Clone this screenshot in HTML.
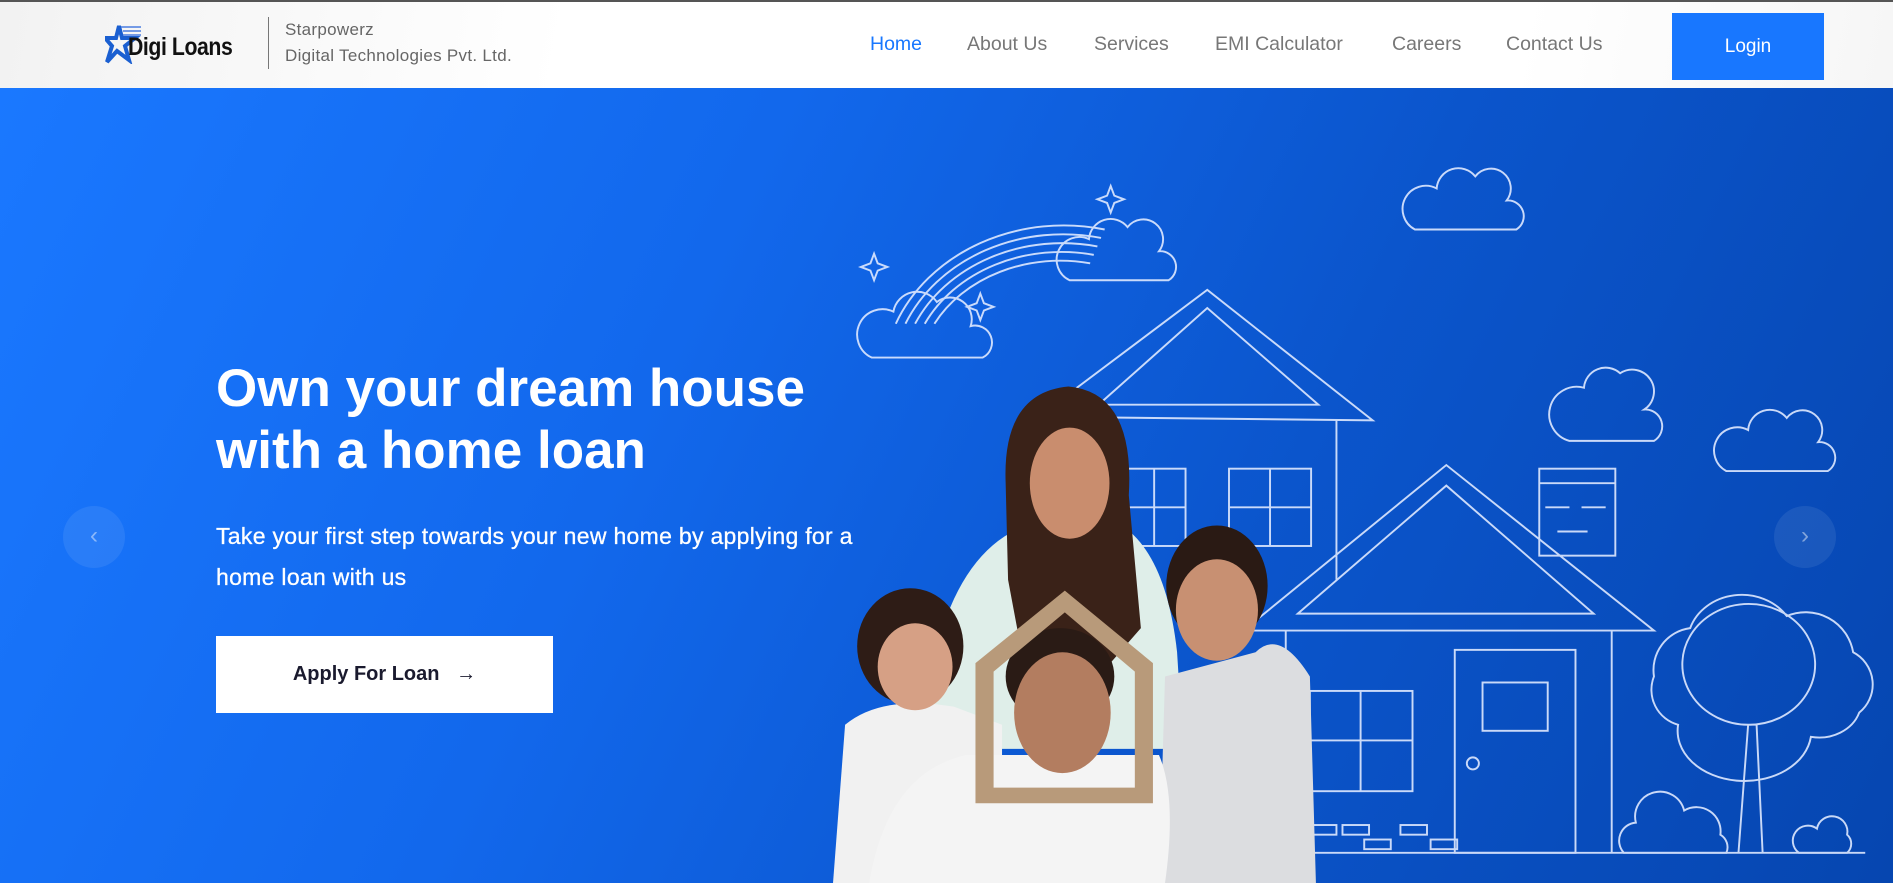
<!DOCTYPE html>
<html><head><meta charset="utf-8"><style>
*{margin:0;padding:0;box-sizing:border-box}
body{width:1893px;height:883px;overflow:hidden;font-family:"Liberation Sans",sans-serif;background:#fff;position:relative}
.top{position:absolute;left:0;top:0;width:1893px;height:2px;background:#555}
header{position:absolute;left:0;top:2px;width:1893px;height:86px;background:linear-gradient(100deg,#f2f2f2,#fff 30%,#fff 80%,#f6f6f6)}
.logo{position:absolute;left:105px;top:20px}
.brand{position:absolute;left:128px;top:31px;font-size:25px;font-weight:bold;color:#111;letter-spacing:-0.5px;transform:scaleX(0.85);transform-origin:left}
.div{position:absolute;left:268px;top:15px;width:1px;height:52px;background:#777}
.co{position:absolute;left:285px;font-size:17px;color:#666;letter-spacing:0.3px}
nav a{position:absolute;top:31px;font-size:19.5px;color:#777;text-decoration:none}
.login{position:absolute;left:1672px;top:11px;width:152px;height:67px;background:#1877ff;color:#fff;font-size:19px;text-align:center;line-height:67px}
.hero{position:absolute;left:0;top:88px;width:1893px;height:795px;background:linear-gradient(115deg,#1a78ff 0%,#1268ec 35%,#0b55cc 65%,#0646b0 100%)}
h1{position:absolute;left:216px;top:358px;font-size:53px;line-height:62px;color:#fff;font-weight:bold}
p{position:absolute;left:216px;top:516px;font-size:23px;line-height:41px;color:#fff;width:690px;letter-spacing:0.3px;-webkit-text-stroke:0.3px #fff}
.btn{position:absolute;left:216px;top:636px;width:337px;height:77px;background:#fff;color:#1a1a2e;font-weight:bold;font-size:20px;line-height:77px;text-align:center}
.arr{position:absolute;width:62px;height:62px;border-radius:50%;background:rgba(255,255,255,0.08);color:rgba(255,255,255,0.45);font-size:24px;text-align:center;line-height:60px}
</style></head><body>
<div class="hero"></div>
<svg style="position:absolute;left:0;top:0" width="1893" height="883" viewBox="0 0 1568 731" preserveAspectRatio="none">
<g fill="none" stroke="#dfe9ff" stroke-width="1.6" opacity="0.9">
<path d="M742 268 A150 130 0 0 1 915 190"/><path d="M750 268 A142 122 0 0 1 912 197"/><path d="M758 268 A134 114 0 0 1 909 204"/><path d="M766 268 A126 106 0 0 1 906 211"/><path d="M774 268 A118 98 0 0 1 903 218"/>
<path d="M722 296 h92 a14 14 0 0 0 -10 -26 a18 18 0 0 0 -28 -20 a20 20 0 0 0 -36 8 a16 16 0 0 0 -18 38z"/>
<path d="M886 232 h82 a13 13 0 0 0 -8 -24 a16 16 0 0 0 -26 -20 a18 18 0 0 0 -32 10 a14 14 0 0 0 -16 34z"/>
<path d="M1172 190 h84 a13 13 0 0 0 -8 -24 a16 16 0 0 0 -26 -20 a18 18 0 0 0 -32 10 a14 14 0 0 0 -18 34z"/>
<path d="M1300 365 h70 a14 14 0 0 0 -8 -26 a16 16 0 0 0 -20 -30 a18 18 0 0 0 -30 12 a14 14 0 0 0 -12 44z"/>
<path d="M1430 390 h84 a13 13 0 0 0 -8 -24 a16 16 0 0 0 -26 -20 a18 18 0 0 0 -32 10 a14 14 0 0 0 -18 34z"/>
<path d="M920 154 l3 8 8 3 -8 3 -3 8 -3 -8 -8 -3 8 -3z"/><path d="M724 210 l3 8 8 3 -8 3 -3 8 -3 -8 -8 -3 8 -3z"/><path d="M812 243 l3 8 8 3 -8 3 -3 8 -3 -8 -8 -3 8 -3z"/>
<path d="M860 345 L1000 240 L1137 348 Z"/><path d="M910 335 L1000 255 L1092 335 Z"/>
<path d="M918 348 V560 M1107 348 V480"/>
<rect x="930" y="388" width="52" height="64"/><path d="M956 388V452M930 420H982"/>
<rect x="1018" y="388" width="68" height="64"/><path d="M1052 388V452M1018 420H1086"/>
<path d="M1030 522 L1198 385 L1370 522 Z"/><path d="M1075 508 L1198 402 L1320 508 Z"/>
<path d="M1065 522 V706 M1335 522 V706"/>
<rect x="1275" y="388" width="63" height="72"/><path d="M1275 400H1338M1280 420h20M1310 420h20M1290 440h25"/>
<rect x="1205" y="538" width="100" height="168"/><rect x="1228" y="565" width="54" height="40"/><circle cx="1220" cy="632" r="5"/>
<rect x="1085" y="572" width="85" height="83"/><path d="M1127 572V655M1085 613H1170"/>
<path d="M1080 706 H1545"/>
<rect x="1085" y="683" width="22" height="8"/><rect x="1112" y="683" width="22" height="8"/><rect x="1160" y="683" width="22" height="8"/><rect x="1130" y="695" width="22" height="8"/><rect x="1185" y="695" width="22" height="8"/>
<path d="M1440 706 L1448 600 M1460 706 L1455 600 M1448 600 a55 50 0 1 1 1 0z M1390 600 a30 30 0 0 1 -20 -40 a35 35 0 0 1 30 -40 a45 40 0 0 1 80 -10 a40 40 0 0 1 55 30 a30 30 0 0 1 5 50 a35 30 0 0 1 -40 20 a40 30 0 0 1 -110 -10z"/>
<path d="M1345 706 a15 15 0 0 1 10 -25 a20 20 0 0 1 40 -10 a20 20 0 0 1 30 20 a12 12 0 0 1 5 15z"/>
<path d="M1490 706 a10 10 0 0 1 15 -20 a10 10 0 0 1 25 5 a10 10 0 0 1 0 15z"/>
</g>
<path d="M775 540 Q800 440 870 430 L920 430 Q965 450 975 540 L980 620 L770 620Z" fill="#dfeee9"/>
<path d="M833 400 Q830 325 885 320 Q940 325 935 410 L945 520 L910 560 L850 560 L835 480Z" fill="#3a2218"/>
<ellipse cx="886" cy="400" rx="33" ry="46" fill="#c98d6e"/>
<path d="M1040 540 Q1060 520 1085 560 L1090 731 L960 731 L965 560 Z" fill="#dcdde0"/>
<ellipse cx="1008" cy="485" rx="42" ry="50" fill="#2a1a14"/>
<ellipse cx="1008" cy="505" rx="34" ry="42" fill="#c89072"/>
<path d="M700 600 Q730 575 790 585 L830 600 L830 731 L690 731 Z" fill="#f1f1f1"/>
<ellipse cx="754" cy="535" rx="44" ry="48" fill="#2e1c16"/>
<ellipse cx="758" cy="552" rx="31" ry="36" fill="#d6a085"/>
<path d="M720 731 Q735 640 800 625 L960 625 Q975 660 965 731 Z" fill="#f4f4f4"/>
<ellipse cx="878" cy="560" rx="45" ry="40" fill="#2a1b15"/>
<ellipse cx="880" cy="590" rx="40" ry="50" fill="#b37d60"/>
<path d="M882 489 L955 549 L955 665 L808 665 L808 549 Z M882 507 L940 556 L940 652 L823 652 L823 556 Z" fill="#b89a7a" fill-rule="evenodd"/>
</svg>
<div class="top"></div>
<header>
<svg class="logo" width="36" height="42" viewBox="0 0 36 42"><path d="M14 4 L17 16 L30 16 L20 24 L24 38 L12 29 L2 40 L7 24 L0 16 L11 16Z" fill="none" stroke="#1a5fd1" stroke-width="4"/><path d="M16 5 H40 M18 9 H40 M18 13 H40" stroke="#4a7de0" stroke-width="1.5"/></svg>
<div class="brand">Digi Loans</div>
<div class="div"></div>
<div class="co" style="top:18px">Starpowerz</div>
<div class="co" style="top:44px">Digital Technologies Pvt. Ltd.</div>
<nav><a style="left:870px;color:#1877ff">Home</a><a style="left:967px">About Us</a><a style="left:1094px">Services</a><a style="left:1215px">EMI Calculator</a><a style="left:1392px">Careers</a><a style="left:1506px">Contact Us</a></nav>
<div class="login">Login</div>
</header>
<h1>Own your dream house<br>with a home loan</h1>
<p>Take your first step towards your new home by applying for a home loan with us</p>
<div class="btn">Apply For Loan &nbsp;&nbsp;→</div>
<div class="arr" style="left:63px;top:506px">‹</div>
<div class="arr" style="left:1774px;top:506px">›</div>
</body></html>
